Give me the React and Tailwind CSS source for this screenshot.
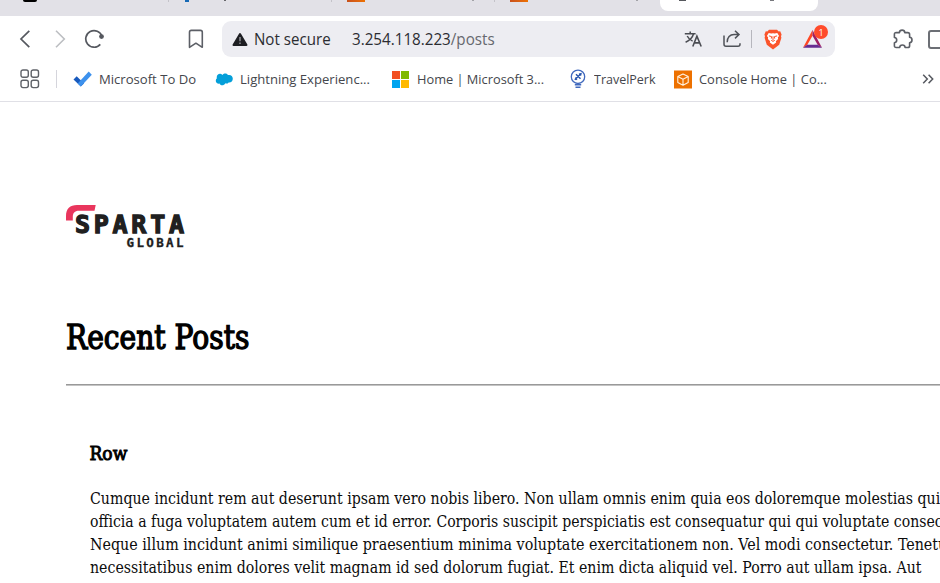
import { useLayoutEffect, useRef, useState } from 'react';

// Single line of text, condensed or widened to fill the given width.
function Fit({ w, className = '', children }) {
  const ref = useRef(null);
  const [scale, setScale] = useState(1);
  useLayoutEffect(() => {
    setScale(w / ref.current.offsetWidth);
  }, [w]);
  return (
    <span className={`block shrink-0 ${className}`} style={{ width: w }}>
      <span ref={ref} className="inline-block origin-left whitespace-pre" style={{ transform: `scaleX(${scale})` }}>
        {children}
      </span>
    </span>
  );
}

function Icon({ w, h, className = '', children }) {
  return (
    <svg width={w} height={h} viewBox={`0 0 ${w} ${h}`} fill="none" className={`block shrink-0 ${className}`}>
      {children}
    </svg>
  );
}

function TabStrip() {
  return (
    <div className="flex h-4 items-start bg-[#e2e1e7]">
      <div className="ml-[23px] h-[2px] w-[14px] rounded-b-full bg-black" />
      <div className="ml-[131px] h-[2px] w-px bg-[#c4c3c9]" />
      <div className="ml-[16px] h-[2px] w-[4px] bg-[#1769b5]" />
      <div className="ml-[35px] h-px w-[2px] bg-[#66666b]" />
      <div className="ml-[105px] h-[2px] w-px bg-[#c4c3c9]" />
      <div className="ml-[15px] h-[2px] w-[18px] bg-gradient-to-r from-[#c8511b] to-[#ed7100]" />
      <div className="ml-[107px] h-px w-[2px] bg-[#a3a3a8]" />
      <div className="ml-[20px] h-[2px] w-px bg-[#c4c3c9]" />
      <div className="ml-[15px] h-[2px] w-[18px] bg-gradient-to-r from-[#c8511b] to-[#ed7100]" />
      <div className="ml-[108px] h-px w-[2px] bg-[#a3a3a8]" />
      <div className="ml-[22px] flex h-[11px] w-[158px] items-start rounded-b-lg bg-white">
        <div className="ml-[19px] h-px w-[7px] bg-[#55575c]" />
        <div className="ml-[84px] h-px w-[4px] bg-[#77787d]" />
      </div>
    </div>
  );
}

function AddressBar() {
  return (
    <div className="ml-[18px] flex h-9 w-[613px] shrink-0 items-center rounded-[9px] bg-[#ededf2]">
      <Icon w={16} h={15} className="ml-[10px]">
        <path d="M8 2 14.5 13H1.5Z" fill="#1d1e22" stroke="#1d1e22" strokeWidth="2" strokeLinejoin="round" />
        <path d="M8 5v4.2M8 10.6v1.5" stroke="#a0a0a5" strokeWidth="1.3" />
      </Icon>
      <Fit w={77} className="ml-[6px] text-[15.5px] leading-6 text-[#2b2c31]">Not secure</Fit>
      <Fit w={143} className="ml-[21px] text-[15.5px] leading-6 text-[#2b2c31]">
        3.254.118.223<span className="text-[#66686e]">/posts</span>
      </Fit>
      <Icon w={18} h={18} className="ml-[189px]">
        <path d="M.8 3.8h10.8M6.2 1.5v2.3M9.5 4C8.4 7.8 5.2 10.6 1.6 12.2M3.2 6c1.2 2.4 3 4 5.4 5.2" stroke="#4b4d53" strokeWidth="1.5" />
        <path d="m8.8 16.5 4.1-10.4 4.3 10.4M10.3 12.9h5.4" stroke="#4b4d53" strokeWidth="1.6" />
      </Icon>
      <Icon w={20} h={20} className="ml-[20px]">
        <path d="M2 6.5v8.8a2 2 0 0 0 2 2h12a2 2 0 0 0 2-2v-1" stroke="#4f5258" strokeWidth="1.5" />
        <path d="M5.2 13.2C5.2 8.2 8 5.6 12 5.6h4.5M13 1.8l4 3.8-4 3.8" stroke="#4f5258" strokeWidth="1.5" />
      </Icon>
      <div className="ml-[9px] h-[18px] w-px bg-[#b6b6bd]" />
      <Icon w={18} h={21} className="ml-[12px]">
        <path d="M5 .7h8l1.7 1.8 1.5-.2 1.4 3.2-.6 1.7.4 1.5-2.2 7.1L9 20.6 2.8 15.8.6 8.7 1 7.2.4 5.5l1.4-3.2 1.5.2Z" fill="#fb542b" />
        <path d="m4.7 4 2.6.6L9 4.2l1.7.4 2.6-.6 1.8 3-1.2 1.3.2 1.6-2.3 2.3.4 1.2L9 15.7l-3.2-2.3.4-1.2-2.3-2.3.2-1.6L2.9 7Z" fill="#fff" />
        <path d="m4.9 6.9 2.7.7-.3 2M13.1 6.9l-2.7.7.3 2M9 7.3v4M7.2 11.3 9 12.4l1.8-1.1" stroke="#fb542b" strokeWidth="1" />
      </Icon>
      <div className="relative ml-[20px]">
        <Icon w={21} h={20}>
          <path d="M10.5 1 1 18.7l4.2-2.6 5.3-9.3Z" fill="#ff4724" />
          <path d="m10.5 1 9.5 17.7-4.2-2.6-5.3-9.3Z" fill="#9e1f63" />
          <path d="m1 18.7 4.2-3h10.6l4.2 3Z" fill="#662d91" />
        </Icon>
        <div className="absolute left-[12px] top-[-4px] flex h-[14px] w-[14px] items-center justify-center rounded-full bg-[#ff4b2b] text-[9px] leading-none text-white">1</div>
      </div>
    </div>
  );
}

function Toolbar() {
  return (
    <div className="flex h-[46px] items-center">
      <Icon w={12} h={20} className="ml-[19px]">
        <path d="m10.3 1.8-8.3 8.2 8.3 8.2" stroke="#55585f" strokeWidth="1.7" />
      </Icon>
      <Icon w={12} h={20} className="ml-[24px]">
        <path d="m1 1.8 8.3 8.2L1 18.2" stroke="#bcbec2" strokeWidth="1.6" />
      </Icon>
      <Icon w={22} h={20} className="ml-[17px]">
        <path d="M16.3 15.4A8.3 8.3 0 1 1 18 7.5" stroke="#55585f" strokeWidth="1.7" />
        <circle cx="17.5" cy="7.6" r="2.4" fill="#55585f" />
      </Icon>
      <Icon w={16} h={20} className="ml-[82px]">
        <path d="M1.5 18.3V3.2C1.5 2 2.1 1.4 3.3 1.4h9.2c1.2 0 1.8.6 1.8 1.8v15.1l-6.4-4.1Z" stroke="#5c5f66" strokeWidth="1.6" strokeLinejoin="round" />
      </Icon>
      <AddressBar />
      <Icon w={21} h={21} className="ml-[57px]">
        <path d="M4.2 3.6h3.2c.2-3.3 5.2-3.3 5.4 0h3c1.2 0 1.8.6 1.8 1.8v2.9c3.2.4 3.2 5 0 5.4v3c0 1.2-.6 1.8-1.8 1.8h-2.7c-.2-3.4-5.2-3.4-5.4 0H4.2c-1.2 0-1.8-.6-1.8-1.8v-3c3.1-.2 3.1-5 0-5.2V5.4c0-1.2.6-1.8 1.8-1.8Z" stroke="#5c5f66" strokeWidth="1.6" strokeLinejoin="round" />
      </Icon>
      <div className="ml-[15px] h-[19px] w-5 shrink-0 rounded-[3px] border-2 border-[#6c6f75]" />
    </div>
  );
}

function Bookmarks() {
  return (
    <div className="flex h-10 items-center border-b border-[#e0e0e6] pb-[5px] text-[13.5px] leading-5 text-[#44464c]">
      <Icon w={20} h={20} className="ml-[20px]">
        <g stroke="#5f6268" strokeWidth="1.4">
          <rect x="1" y="1" width="7.3" height="7.3" rx="2" />
          <rect x="11.2" y="1" width="7.3" height="7.3" rx="2" />
          <rect x="1" y="11.3" width="7.3" height="7.3" rx="2" />
          <rect x="11.2" y="11.3" width="7.3" height="7.3" rx="2" />
        </g>
      </Icon>
      <div className="ml-[16px] h-[18px] w-px shrink-0 bg-[#d5d5dc]" />
      <Icon w={19} h={16} className="ml-[16px]">
        <path d="m.5 8.4 3.2-3.2L11 12.4l-3.2 3.1Z" fill="#185abd" />
        <path d="m4.7 12.4 11-11.8 3.1 3.1L7.8 15.5Z" fill="#3c91ed" />
      </Icon>
      <Fit w={97} className="ml-[7px]">Microsoft To Do</Fit>
      <Icon w={18} h={13} className="ml-[19px]">
        <path d="M7.5 2C9-.1 12.2.2 13 2.1c2.6-.7 4.8 1 4.8 3.6 0 2.3-1.8 4-4.2 3.7-.9 1.3-2.1 1.5-3.3.9-1.2 2.7-5 2.7-5.8.3C2.2 10.9.7 9.5.8 7.6c0-1 .4-1.7 1.1-2.3C.9 2.3 4.6-.9 7.5 2Z" fill="#049fd9" />
      </Icon>
      <Fit w={130} className="ml-[7px]">Lightning Experienc...</Fit>
      <div className="ml-[22px] grid h-[17px] w-[17px] shrink-0 grid-cols-2 gap-px">
        <div className="bg-[#f25022]" />
        <div className="bg-[#7fba00]" />
        <div className="bg-[#00a4ef]" />
        <div className="bg-[#ffb900]" />
      </div>
      <Fit w={127} className="ml-[8px]">Home | Microsoft 3...</Fit>
      <Icon w={16} h={20} className="ml-[26px]">
        <circle cx="8" cy="7.8" r="6.7" stroke="#4069bd" strokeWidth="1.3" />
        <path d="m4.8 10.8 6-6M6 5.3l4.5 4.4M5.2 8.8l1.8 1.8M9 5.2l1.9-.5-.4 2" stroke="#2856ae" strokeWidth="1.5" />
        <path d="M4.8 15.8h6.4M5.5 18.2h5" stroke="#4069bd" strokeWidth="1.4" />
      </Icon>
      <Fit w={62} className="ml-[8px]">TravelPerk</Fit>
      <Icon w={18} h={19} className="ml-[18px]">
        <path d="M0 .5h18v18H0Z" fill="#ed7100" />
        <path d="m9 4 5.2 2.6v5.8L9 15.2l-5.2-2.8V6.6ZM3.8 6.6 9 9.2l5.2-2.6M9 9.2v6" stroke="#fff1df" strokeWidth="1.1" strokeLinejoin="round" />
      </Icon>
      <Fit w={128} className="ml-[7px]">Console Home | Co...</Fit>
      <Icon w={12} h={10} className="ml-[95px]">
        <path d="m1.2.8 4.1 4.2-4.1 4.2M6.6.8 10.7 5 6.6 9.2" stroke="#55585f" strokeWidth="1.5" />
      </Icon>
    </div>
  );
}

function Logo() {
  return (
    <svg width="120" height="46" viewBox="0 0 120 46" className="block font-['DejaVu_Sans_Mono',monospace] font-bold">
      <path d="M0 16.4V12C0 4.8 4 1 11 1h18.7l-1.2 5.8H13c-4.5 0-6.2 2.4-6.2 6.3v3.3Z" fill="#e9365d" />
      <text x="9" y="29.4" fontSize="25" textLength="109" stroke="#202020" strokeWidth="1.3" fill="#202020">SPARTA</text>
      <text x="60.5" y="43" fontSize="12.5" textLength="57" stroke="#202020" strokeWidth=".3" fill="#202020">GLOBAL</text>
    </svg>
  );
}

const lines = [
  [850, 'Cumque incidunt rem aut deserunt ipsam vero nobis libero. Non ullam omnis enim quia eos doloremque molestias qui'],
  [853, 'officia a fuga voluptatem autem cum et id error. Corporis suscipit perspiciatis est consequatur qui qui voluptate consec'],
  [857, 'Neque illum incidunt animi similique praesentium minima voluptate exercitationem non. Vel modi consectetur. Tenetu'],
  [832, 'necessitatibus enim dolores velit magnam id sed dolorum fugiat. Et enim dicta aliquid vel. Porro aut ullam ipsa. Aut'],
];

export default function App() {
  return (
    <div className="h-[583px] w-[940px] overflow-hidden bg-white font-['Open_Sans','Noto_Sans',sans-serif]">
      <TabStrip />
      <Toolbar />
      <Bookmarks />
      <main className="pl-[66px] pt-[102px] font-['DejaVu_Serif_Condensed','DejaVu_Serif',serif] text-black">
        <Logo />
        <h1 className="mt-[66px] text-[33.5px] leading-[44px] [-webkit-text-stroke:1.3px_black]">
          <Fit w={183}>Recent Posts</Fit>
        </h1>
        <hr className="mt-[24px] h-[2px] border-t border-[#999] bg-[#c4c4c4]" />
        <article className="pl-[23.5px]">
          <h2 className="mt-[55px] text-[19px] leading-6 [-webkit-text-stroke:0.9px_black]">
            <Fit w={38}>Row</Fit>
          </h2>
          <div className="mt-[22px] text-[17.5px] leading-[23px] text-[#0c0c0c]">
            {lines.map(([w, text]) => (
              <Fit key={text} w={w} className="h-[23px]">{text}</Fit>
            ))}
          </div>
        </article>
      </main>
    </div>
  );
}
